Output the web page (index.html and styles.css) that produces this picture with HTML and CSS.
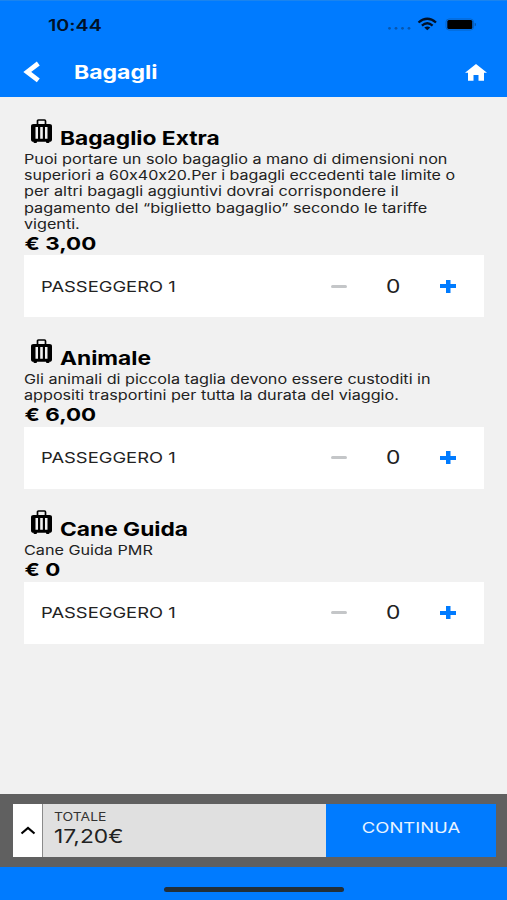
FILE: index.html
```
<!DOCTYPE html>
<html lang="it">
<head>
<meta charset="utf-8">
<meta name="viewport" content="width=device-width">
<title>Bagagli</title>
<link rel="stylesheet" href="styles.css">
</head>
<body>
<svg class="defs" width="0" height="0" aria-hidden="true">
  <symbol id="suitcase" viewBox="0 0 21 25">
    <path fill="none" stroke="#000" stroke-width="1.7" d="M6.500 6V2Q6.500 1 7.500 1h6q1 0 1 1V6"/>
    <path fill-rule="evenodd" d="M2.600 5h15.800Q21 5 21 7.400v13q0 2.400-2.600 2.400H2.600Q0 22.800 0 20.400V7.400Q0 5 2.600 5zM4.500 8v11.800h2.500V8zM9.200 8v11.800h2.600V8zM14 8v11.800h2.500V8z"/>
    <path d="M2.500 22h3.500v1q0 1-1 1h-1.500q-1 0-1-1zM15 22h3.500v1q0 1-1 1h-1.500q-1 0-1-1z"/>
  </symbol>
</svg>
<div class="screen">
  <header class="header">
    <div class="status">
      <span class="time wide">10:44</span>
      <svg class="indicators" width="92" height="16" viewBox="0 0 92 16">
        <g fill="#0756ae"><circle cx="4.500" cy="13.300" r="1.400"/><circle cx="11" cy="13.300" r="1.400"/><circle cx="17.500" cy="13.300" r="1.400"/><circle cx="24" cy="13.300" r="1.400"/></g>
        <g fill="none" stroke="#001128" stroke-width="2.300"><path d="M33.500 7.500Q42.300 -0.100 51 7.500"/><path d="M36.900 10.600Q42.300 6 47.600 10.600"/></g>
        <path fill="#001128" d="M39.300 12.600Q42.300 10.200 45.300 12.600L42.300 15.200z"/>
        <rect x="61" y="4" width="27.500" height="11" rx="3" fill="none" stroke="#0763c4"/>
        <rect x="62.300" y="5" width="25" height="9" rx="1.500" fill="#000"/>
        <path d="M89.700 7.700q1.300.3 1.300 1.800t-1.300 1.800z" fill="#0756ae"/>
      </svg>
    </div>
    <div class="nav">
      <svg class="back" width="18" height="22" viewBox="0 0 18 22"><path d="M15.300 2.500L4.300 10.900L15.300 19.300" fill="none" stroke="#fff" stroke-width="4.800"/></svg>
      <h1 class="wide">Bagagli</h1>
      <svg class="home" width="22" height="17" viewBox="0 0 22 17"><path fill="#fff" d="M11 0L22 8.700H19V16.700H13.500V11H8.500V16.700H3V8.700H0z"/></svg>
    </div>
  </header>

  <main class="content">
    <section class="item">
      <div class="item-head"><svg class="case" width="21" height="25"><use href="#suitcase"/></svg><h2 class="wide">Bagaglio Extra</h2></div>
      <p class="desc extra"><span class="wide">Puoi portare un solo bagaglio a mano di dimensioni non</span><span class="wide">superiori a 60x40x20.Per i bagagli eccedenti tale limite o</span><span class="wide">per altri bagagli aggiuntivi dovrai corrispondere il</span><span class="wide">pagamento del “biglietto bagaglio” secondo le tariffe</span><span class="wide">vigenti.</span></p>
      <p class="price wide">€ 3,00</p>
      <div class="card">
        <span class="passenger"><span class="wide">PASSEGGERO 1</span></span>
        <span class="minus"></span><span class="count wide">0</span><span class="plus"></span>
      </div>
    </section>
    <section class="item">
      <div class="item-head"><svg class="case" width="21" height="25"><use href="#suitcase"/></svg><h2 class="wide">Animale</h2></div>
      <p class="desc"><span class="wide">Gli animali di piccola taglia devono essere custoditi in</span><span class="wide">appositi trasportini per tutta la durata del viaggio.</span></p>
      <p class="price wide">€ 6,00</p>
      <div class="card">
        <span class="passenger"><span class="wide">PASSEGGERO 1</span></span>
        <span class="minus"></span><span class="count wide">0</span><span class="plus"></span>
      </div>
    </section>
    <section class="item">
      <div class="item-head"><svg class="case" width="21" height="25"><use href="#suitcase"/></svg><h2 class="wide">Cane Guida</h2></div>
      <p class="desc"><span class="wide">Cane Guida PMR</span></p>
      <p class="price wide">€ 0</p>
      <div class="card">
        <span class="passenger"><span class="wide">PASSEGGERO 1</span></span>
        <span class="minus"></span><span class="count wide">0</span><span class="plus"></span>
      </div>
    </section>
  </main>

  <footer class="summary">
    <button class="expand" aria-label="Dettagli"><svg width="16" height="9" viewBox="0 0 16 9"><path d="M1.500 7.500L8 2l6.500 5.500" fill="none" stroke="#000" stroke-width="2.200"/></svg></button>
    <div class="total"><span class="label wide">TOTALE</span><span class="amount wide">17,20€</span></div>
    <button class="continue"><span class="wide">CONTINUA</span></button>
  </footer>
  <div class="bottom"><div class="handle"></div></div>
</div>
</body>
</html>
```
FILE: styles.css
```
* { box-sizing: border-box; margin: 0; padding: 0; }
body { font-family: Inter, sans-serif; font-feature-settings: "calt" 0; color: #000; background: #f1f1f1; overflow: hidden; }
.defs { display: block; height: 0; }
svg { flex: none; }
.screen { height: 900px; display: flex; flex-direction: column; }

/* Extended letterforms */
.wide { display: block; width: max-content; white-space: nowrap; transform-origin: 0 50%; transform: scaleX(1.244); }

.header { height: 97px; background: #007bff; border-top: 1px solid #1b84ee; flex: none; }
.status { height: 47px; padding: 14px 30px 0 47.500px; display: flex; justify-content: space-between; align-items: flex-start; }
.time { font-size: 15.500px; line-height: 21px; font-weight: 600; color: #001128; transform: scaleX(1.27); }
.nav { height: 48px; display: flex; align-items: center; padding: 0 20px 0 23px; }
.nav h1 { font-size: 19px; line-height: 24px; font-weight: 700; color: #fff; margin: 1px 0 0 32.500px; transform: scaleX(1.21); }
.home { margin-left: auto; }

.content { flex: 1; padding: 0 23px 0 24px; }
.item-head { height: 54px; display: flex; align-items: flex-end; padding-left: 7.300px; }
.item + .item .item-head { height: 53.700px; }
.case { margin-bottom: 7.400px; }
.item-head h2 { font-size: 19px; line-height: 23px; font-weight: 700; margin: 0 0 1px 7.700px; transform: scaleX(1.197); }
.desc { font-size: 13px; line-height: 16.200px; color: #222; padding-left: .3px; }
.extra .wide:nth-child(2) { transform: scaleX(1.233); }
.extra .wide:nth-child(4) { transform: scaleX(1.25); }
.price { font-size: 18px; line-height: 23.200px; font-weight: 700; padding-left: .5px; }
.card { height: 62px; background: #fff; display: flex; align-items: center; padding: 0 28px 0 16.500px; }
.passenger { flex: 1; font-size: 15px; color: #222; }
.passenger .wide { transform: scaleX(1.225); }
.minus { width: 16px; height: 3px; border-radius: 1.500px; background: #c4c6c8; }
.count { font-size: 19px; color: #222; margin: 0 42.500px 0 39px; transform: scaleX(1.2); }
.plus { width: 16px; height: 13px; background: linear-gradient(#007bff, #007bff) center / 16px 4px no-repeat, linear-gradient(#007bff, #007bff) center / 4.500px 13px no-repeat; }

.summary { height: 73px; flex: none; background: #606060; display: flex; padding: 10px 11px 10px 13px; }
.expand { width: 30px; background: #fff; border: 0; border-right: 1px solid #8a8a8a; display: flex; align-items: center; justify-content: center; }
.total { flex: 1; background: #e0e0e0; padding: 4px 0 0 11px; }
.label { font-size: 12px; line-height: 17px; color: #333; transform: scaleX(1.16); }
.amount { font-size: 19px; line-height: 24px; color: #222; transform: scaleX(1.2); }
.continue { width: 170px; background: #007bff; border: 0; font: 15px/20px Inter, sans-serif; color: #e8f3ff; display: flex; justify-content: center; padding-top: 14px; }
.continue .wide { transform-origin: 50% 50%; transform: scaleX(1.23); }
.bottom { height: 33px; flex: none; background: #007bff; display: flex; justify-content: center; padding-top: 20px; }
.handle { width: 180px; height: 5px; border-radius: 3px; background: #222f39; }
```
